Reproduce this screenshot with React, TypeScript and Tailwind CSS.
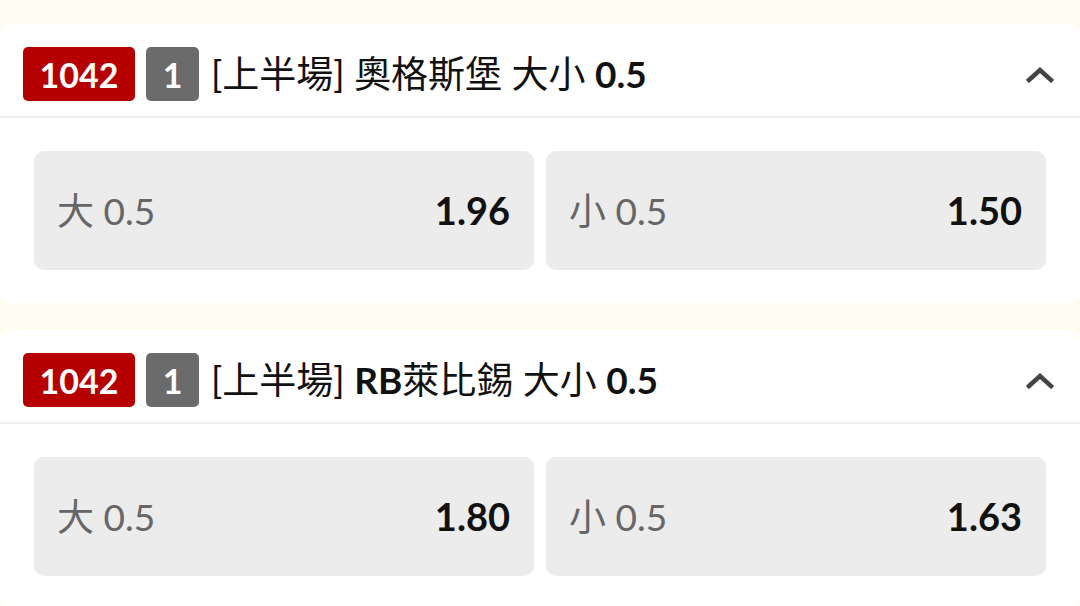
import React from "react";

type Opt = { label: string; value: string };
type Market = { id: string; n: string; team: React.ReactNode; opts: Opt[] };

const markets: Market[] = [
  {
    id: "1042",
    n: "1",
    team: <span>奧格斯堡</span>,
    opts: [
      { label: "大", value: "1.96" },
      { label: "小", value: "1.50" },
    ],
  },
  {
    id: "1042",
    n: "1",
    team: (
      <span>
        <span className="font-bold">RB</span>萊比錫
      </span>
    ),
    opts: [
      { label: "大", value: "1.80" },
      { label: "小", value: "1.63" },
    ],
  },
];

function Chevron() {
  return (
    <svg width="28" height="18" viewBox="0 0 28 18" fill="none">
      <path d="M3 15 L14 5 L25 15" stroke="#444" strokeWidth="4.5" strokeLinecap="square" strokeLinejoin="miter" />
    </svg>
  );
}

function Card({ m }: { m: Market }) {
  return (
    <div className="bg-white rounded-[12px]">
      <div className="h-[94px] flex items-center pt-[8px] pl-[23px] pr-[26px] border-b-2 border-[#efefef]">
        <div className="h-[54px] w-[112px] rounded-[5px] bg-[#b60000] text-white text-[34px] font-bold flex items-center justify-center">
          {m.id}
        </div>
        <div className="ml-[11px] h-[54px] w-[53px] rounded-[5px] bg-[#6b6b6b] text-white text-[34px] font-bold flex items-center justify-center">
          {m.n}
        </div>
        <div className="ml-[12px] text-[37px] text-[#111] whitespace-nowrap">
          [上半場] {m.team} 大小 <span className="font-bold">0.5</span>
        </div>
        <div className="ml-auto flex items-center">
          <Chevron />
        </div>
      </div>
      <div className="flex gap-[12px] px-[34px] pt-[33px] pb-[33px]">
        {m.opts.map((o, i) => (
          <div
            key={i}
            className="flex-1 h-[119px] rounded-[10px] bg-[#ececec] flex items-center justify-between pl-[23px] pr-[24px]"
          >
            <span className="text-[37px] text-[#666]">
              {o.label} 0.5
            </span>
            <span className="text-[38px] font-bold text-[#111]">{o.value}</span>
          </div>
        ))}
      </div>
    </div>
  );
}

export default function App() {
  return (
    <div
      className="w-[1080px] h-[606px] overflow-hidden bg-[#fffcf2] pt-[24px] flex flex-col gap-[27px]"
      style={{ fontFamily: 'Lato, "Noto Sans CJK TC", sans-serif' }}
    >
      {markets.map((m, i) => (
        <Card key={i} m={m} />
      ))}
    </div>
  );
}
